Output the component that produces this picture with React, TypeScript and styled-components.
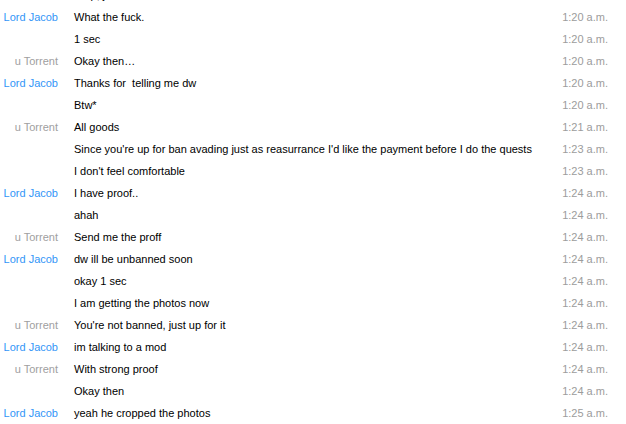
import React, { FC } from 'react';
import styled, { createGlobalStyle } from 'styled-components';

const GlobalStyle = createGlobalStyle`
  html, body {
    margin: 0;
    padding: 0;
    background: #ffffff;
    overflow: hidden;
  }
`;

const Root = styled.div`
  width: 626px;
  height: 424px;
  overflow: hidden;
  background: #ffffff;
  font-family: "Liberation Sans", Arial, sans-serif;
  font-size: 11px;
`;

const List = styled.div`
  display: flex;
  flex-direction: column;
  margin-top: -16px;
`;

const Row = styled.div`
  display: grid;
  grid-template-columns: 58px 1fr auto;
  column-gap: 16px;
  align-items: center;
  height: 22px;
  padding-right: 18px;
`;

const Name = styled.span<{ $user: 'jacob' | 'torrent' | '' }>`
  text-align: right;
  white-space: nowrap;
  color: ${(p) => (p.$user === 'jacob' ? '#3396f7' : '#a0a0a0')};
`;

const Text = styled.span`
  color: #000000;
  white-space: pre;
`;

const Time = styled.span`
  color: #9c9c9c;
  text-align: right;
`;

type Msg = { user: 'jacob' | 'torrent' | ''; text: string; time: string };

// the first row is scrolled mostly out of view; only its descenders show
const messages: Msg[] = [
  { user: '', text: 'Stop, just', time: '' },
  { user: 'jacob', text: 'What the fuck.', time: '1:20 a.m.' },
  { user: '', text: '1 sec', time: '1:20 a.m.' },
  { user: 'torrent', text: 'Okay then…', time: '1:20 a.m.' },
  { user: 'jacob', text: 'Thanks for  telling me dw', time: '1:20 a.m.' },
  { user: '', text: 'Btw*', time: '1:20 a.m.' },
  { user: 'torrent', text: 'All goods', time: '1:21 a.m.' },
  { user: '', text: "Since you're up for ban avading just as reasurrance I'd like the payment before I do the quests", time: '1:23 a.m.' },
  { user: '', text: "I don't feel comfortable", time: '1:23 a.m.' },
  { user: 'jacob', text: 'I have proof..', time: '1:24 a.m.' },
  { user: '', text: 'ahah', time: '1:24 a.m.' },
  { user: 'torrent', text: 'Send me the proff', time: '1:24 a.m.' },
  { user: 'jacob', text: 'dw ill be unbanned soon', time: '1:24 a.m.' },
  { user: '', text: 'okay 1 sec', time: '1:24 a.m.' },
  { user: '', text: 'I am getting the photos now', time: '1:24 a.m.' },
  { user: 'torrent', text: "You're not banned, just up for it", time: '1:24 a.m.' },
  { user: 'jacob', text: 'im talking to a mod', time: '1:24 a.m.' },
  { user: 'torrent', text: 'With strong proof', time: '1:24 a.m.' },
  { user: '', text: 'Okay then', time: '1:24 a.m.' },
  { user: 'jacob', text: 'yeah he cropped the photos', time: '1:25 a.m.' },
];

const names = { jacob: 'Lord Jacob', torrent: 'u Torrent', '': '' };

const App: FC = () => (
  <Root>
    <GlobalStyle />
    <List>
      {messages.map((m, i) => (
        <Row key={i}>
          <Name $user={m.user}>{names[m.user]}</Name>
          <Text>{m.text}</Text>
          <Time>{m.time}</Time>
        </Row>
      ))}
    </List>
  </Root>
);

export default App;
